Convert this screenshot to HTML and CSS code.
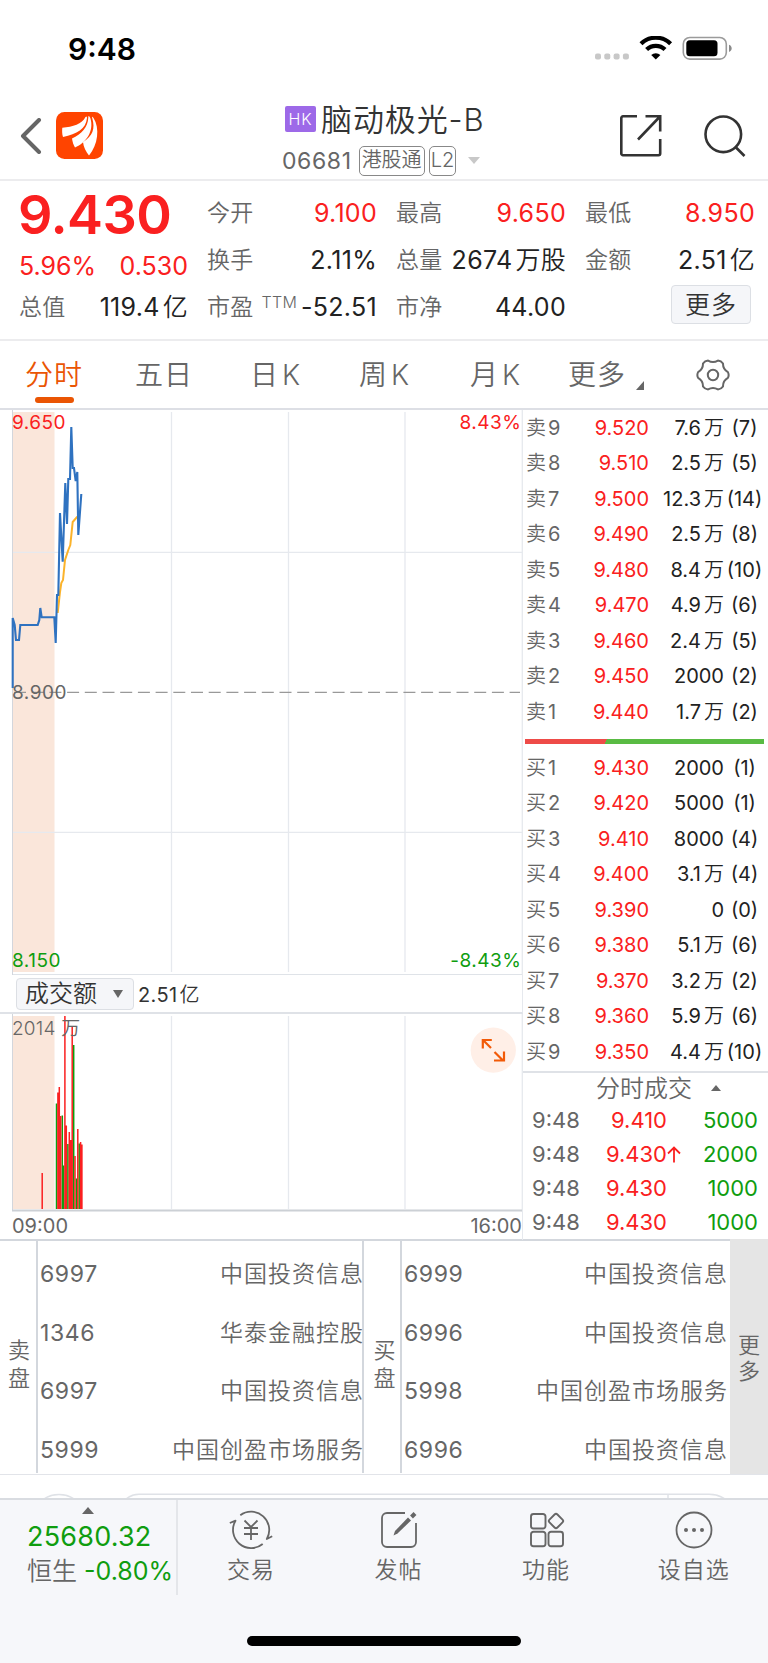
FILE: index.html
```html
<!DOCTYPE html>
<html lang="zh-CN">
<head>
    <meta charset="UTF-8">
    <meta name="viewport" content="width=device-width, initial-scale=1.0">
    <title>脑动极光-B 06681</title>
    <link rel="stylesheet" href="styles.css">
</head>
<body>
    <div class="status-bar">
        <div class="time">9:48</div>
        <svg class="status-icons" width="140" height="26" viewBox="0 0 140 26">
            <g fill="#c8c8c8">
                <rect x="0" y="17.500" width="6" height="6" rx="2"/>
                <rect x="9.3" y="17.500" width="6" height="6" rx="2"/>
                <rect x="18.6" y="17.500" width="6" height="6" rx="2"/>
                <rect x="27.9" y="17.500" width="6" height="6" rx="2"/>
            </g>
            <g fill="none" stroke="#000" stroke-width="4.2">
                <path d="M46 7.800a21 21 0 0 1 29.6 0"/>
                <path d="M51.600 13.600a13 13 0 0 1 18.400 0"/>
            </g>
            <path d="M60.8 23.500l-4.600-4.600a7 7 0 0 1 9.200 0z"/>
            <rect x="88.3" y="1.500" width="43" height="21.6" rx="6.5" fill="#fff" stroke="#9b9b9b" stroke-width="1.6"/>
            <rect x="91.3" y="4.300" width="31.2" height="16" rx="3.5"/>
            <path d="M134 8.700c3.600 1.200 3.600 6 0 7.200z" fill="#8a8a8a"/>
        </svg>
    </div>

    <div class="header">
        <svg class="back" width="22" height="36" viewBox="0 0 22 36" fill="none" stroke="#666" stroke-width="4" stroke-linecap="round" stroke-linejoin="round"><path d="M19 2L3 18l16 16"/></svg>
        <svg class="logo" width="47" height="47" viewBox="0 0 47 47">
            <rect width="47" height="47" rx="8.5" fill="#ff4400"/>
            <g fill="#fff">
                <path d="M6.300 15.700C17 15 26 12 29.500 5Q31 3.500 31 6C30 17 21 22 7 25C6 22 6 18 6.300 15.700z"/>
                <path d="M32.300 5.500C32 15 25.500 22.500 16 26.500C16.500 30 17.500 33 19 35.500C30 31 38.500 19 34.300 6Q32.300 2.500 32.300 5.500z"/>
                <path d="M36.200 6C39.500 17 36.500 24 27 30C27.500 35 30 40 33 43.500C42 33 44 16 37.500 6Q35.700 3.500 36.200 6z"/>
            </g>
        </svg>
        <div class="title">
            <div class="name"><span class="hk">HK</span>脑动极光-B</div>
            <div class="code">06681<span class="tag">港股通</span><span class="tag l2">L2</span><i class="caret"></i></div>
        </div>
        <svg class="share" width="42" height="42" viewBox="0 0 42 42" fill="none" stroke="#333" stroke-width="2.600"><path d="M17 1.300H3a1.700 1.700 0 0 0-1.700 1.700v35.500a1.700 1.700 0 0 0 1.700 1.700h35.500a1.700 1.700 0 0 0 1.700-1.700V24M25.500 1.300h14.700V16.500M40 1.500L18 24.500"/></svg>
        <svg class="search" width="42" height="42" viewBox="0 0 42 42" fill="none" stroke="#333" stroke-width="2.600"><circle cx="19.300" cy="19.300" r="17.800"/><path d="M31 31.500l9.500 9.500"/></svg>
    </div>

    <div class="quote">
        <div class="quote-main">
            <div class="price">9.430</div>
            <div class="cell change"><span>5.96%</span><span>0.530</span></div>
            <div class="cell cap"><label>总值</label><b>119.4<em>亿</em></b></div>
        </div>
        <div class="quote-col">
            <div class="cell"><label>今开</label><b class="red">9.100</b></div>
            <div class="cell"><label>换手</label><b>2.11%</b></div>
            <div class="cell"><label class="pe">市盈<sup>TTM</sup></label><b>-52.51</b></div>
        </div>
        <div class="quote-col">
            <div class="cell"><label>最高</label><b class="red">9.650</b></div>
            <div class="cell"><label>总量</label><b>2674<em>万股</em></b></div>
            <div class="cell"><label>市净</label><b>44.00</b></div>
        </div>
        <div class="quote-col">
            <div class="cell"><label>最低</label><b class="red">8.950</b></div>
            <div class="cell"><label>金额</label><b>2.51<em>亿</em></b></div>
            <div class="cell end"><button class="more-btn">更多</button></div>
        </div>
    </div>

    <div class="tabs">
        <div class="tab active">分时</div>
        <div class="tab">五日</div>
        <div class="tab">日<i>K</i></div>
        <div class="tab">周<i>K</i></div>
        <div class="tab">月<i>K</i></div>
        <div class="tab">更多<svg width="8" height="9" viewBox="0 0 8 9"><path d="M8 0v9H0z" fill="#666"/></svg></div>
        <svg class="gear" width="34" height="32" viewBox="-17 -16 34 32" fill="none" stroke="#666" stroke-width="2" stroke-linejoin="round"><circle r="5.200"/><path d="M14.900 -2.900Q16.400 0 14.900 2.900Q9.900 5.700 10 11.500Q8.200 14.200 4.950 14.400Q0 11.400 -4.950 14.400Q-8.200 14.200 -10 11.500Q-9.900 5.700 -14.900 2.900Q-16.400 0 -14.900 -2.900Q-9.900 -5.700 -10 -11.500Q-8.200 -14.200 -4.950 -14.400Q0 -11.400 4.950 -14.400Q8.200 -14.200 10 -11.500Q9.900 -5.700 14.900 -2.900z"/></svg>
    </div>

    <div class="market">
        <div class="charts">
            <!-- price line -->
            <svg class="price-chart" width="523" height="565" viewBox="0 0 523 565">
                <rect x="12" y="2" width="42.500" height="560" fill="#fae6da"/>
                <path d="M12.500 0V565" stroke="#d3d6dc" fill="none"/>
                <path d="M171.500 2V562M288.500 2V562M405 2V562M522.300 0V565M13 142.300H522M13 422.300H522" stroke="#e6e9ee" stroke-width="1.300" fill="none"/>
                <path d="M14 282.400H520" stroke="#999" stroke-width="1.400" stroke-dasharray="12 5.700" fill="none"/>
                <path d="M13 564.500H522" stroke="#dfe3e8" fill="none"/>
                <polyline points="57.7,203 60,182 61.3,173 63,170 65,150 68.3,140 70.3,135 72.7,112 75.3,109 77.3,106.7" fill="none" stroke="#fbb32b" stroke-width="2"/>
                <polyline points="12.7,278 12.7,208 14.7,215 16,230 19,230 20.3,215 37.7,215 39.3,210 40.3,198 41.7,207.3 54.3,207.3 55.7,233 57,185 58.3,185 60,103 62.7,151.7 65.3,73 67,114 68.3,69 70,69 71.3,17 72.7,58 74,58 75.7,71 77.3,62 78.300,125 81.300,84" fill="none" stroke="#2f72c0" stroke-width="2.100"/>
                <text x="12" y="18.700" class="red">9.650</text>
                <text x="521.500" y="18.700" class="red" text-anchor="end">8.43%</text>
                <text x="12" y="288.500">8.900</text>
                <text x="12" y="557" class="green">8.150</text>
                <text x="521.500" y="557" class="green" text-anchor="end">-8.43%</text>
            </svg>
            <div class="indicator">
                <div class="select">成交额<i></i></div>
                <span>2.51<em>亿</em></span>
            </div>
            <!-- turnover bars -->
            <svg class="vol-chart" width="523" height="198" viewBox="0 0 523 198">
                <rect x="12" y="2" width="42.500" height="193" fill="#fae6da"/>
                <path d="M171.500 2V195M288.500 2V195M405 2V195M522.300 0V198" stroke="#e6e9ee" stroke-width="1.300" fill="none"/>
                <path d="M12.500 0V197" stroke="#d3d6dc" fill="none"/>
                <g stroke-width="1.500" fill="none">
                    <path stroke="#0f9d0f" d="M56.500 195V89.500M62.300 195V101.500M63.500 195V151.500M67.900 195V130M73.700 195V31M76.500 195V164.500M79.200 195V129.500"/>
                    <path stroke="#fa2020" d="M42.200 195V159M57.900 195V78.500M59.300 195V73M60.700 195V102M64.900 195V2M66.300 195V111.500M69.300 195V118M70.800 195V126M72.200 195V13M75 195V142M77.800 195V115M80.600 195V128M81.900 195V130.500"/>
                </g>
                <path d="M12 196.500H522" stroke="#ccd0d5" stroke-width="1.800" fill="none"/>
                <text x="12" y="20.700" class="peak">2014 万</text>
                <circle cx="493.300" cy="36.200" r="22.600" fill="#ffefe7"/>
                <path d="M491 34l-8-8M482.800 34.500V26h9M494.500 38l8 8M504 37.500V46.500h-10" fill="none" stroke="#f25a07" stroke-width="2.200"/>
            </svg>
            <div class="axis"><span>09:00</span><span>16:00</span></div>
        </div>

        <div class="book">
            <div class="levels sell">
                <div class="level"><label>卖<i>9</i></label><b>9.520</b><span>7.6<em>万</em></span><u>(7)</u></div>
                <div class="level"><label>卖<i>8</i></label><b>9.510</b><span>2.5<em>万</em></span><u>(5)</u></div>
                <div class="level"><label>卖<i>7</i></label><b>9.500</b><span>12.3<em>万</em></span><u>(14)</u></div>
                <div class="level"><label>卖<i>6</i></label><b>9.490</b><span>2.5<em>万</em></span><u>(8)</u></div>
                <div class="level"><label>卖<i>5</i></label><b>9.480</b><span>8.4<em>万</em></span><u>(10)</u></div>
                <div class="level"><label>卖<i>4</i></label><b>9.470</b><span>4.9<em>万</em></span><u>(6)</u></div>
                <div class="level"><label>卖<i>3</i></label><b>9.460</b><span>2.4<em>万</em></span><u>(5)</u></div>
                <div class="level"><label>卖<i>2</i></label><b>9.450</b><span>2000</span><u>(2)</u></div>
                <div class="level"><label>卖<i>1</i></label><b>9.440</b><span>1.7<em>万</em></span><u>(2)</u></div>
            </div>
            <div class="ratio"></div>
            <div class="levels buy">
                <div class="level"><label>买<i>1</i></label><b>9.430</b><span>2000</span><u>(1)</u></div>
                <div class="level"><label>买<i>2</i></label><b>9.420</b><span>5000</span><u>(1)</u></div>
                <div class="level"><label>买<i>3</i></label><b>9.410</b><span>8000</span><u>(4)</u></div>
                <div class="level"><label>买<i>4</i></label><b>9.400</b><span>3.1<em>万</em></span><u>(4)</u></div>
                <div class="level"><label>买<i>5</i></label><b>9.390</b><span>0</span><u>(0)</u></div>
                <div class="level"><label>买<i>6</i></label><b>9.380</b><span>5.1<em>万</em></span><u>(6)</u></div>
                <div class="level"><label>买<i>7</i></label><b>9.370</b><span>3.2<em>万</em></span><u>(2)</u></div>
                <div class="level"><label>买<i>8</i></label><b>9.360</b><span>5.9<em>万</em></span><u>(6)</u></div>
                <div class="level"><label>买<i>9</i></label><b>9.350</b><span>4.4<em>万</em></span><u>(10)</u></div>
            </div>
            <div class="trades">
                <div class="trades-title">分时成交<i></i></div>
                <div class="trade"><label>9:48</label><b>9.410</b><s></s><span>5000</span></div>
                <div class="trade"><label>9:48</label><b>9.430</b><s><svg width="14" height="17" viewBox="0 0 14 17" fill="none" stroke="#fa2020" stroke-width="1.800"><path d="M7 16.500V1.500M1 7.500l6-6 6 6"/></svg></s><span>2000</span></div>
                <div class="trade"><label>9:48</label><b>9.430</b><s></s><span>1000</span></div>
                <div class="trade"><label>9:48</label><b>9.430</b><s></s><span>1000</span></div>
            </div>
        </div>
    </div>

    <div class="brokers">
        <div class="side">卖<br>盘</div>
        <div class="broker-list first">
            <div><span>6997</span><em>中国投资信息</em></div>
            <div><span>1346</span><em>华泰金融控股</em></div>
            <div><span>6997</span><em>中国投资信息</em></div>
            <div><span>5999</span><em>中国创盈市场服务</em></div>
        </div>
        <div class="side buy-side">买<br>盘</div>
        <div class="broker-list">
            <div><span>6999</span><em>中国投资信息</em></div>
            <div><span>6996</span><em>中国投资信息</em></div>
            <div><span>5998</span><em>中国创盈市场服务</em></div>
            <div><span>6996</span><em>中国投资信息</em></div>
        </div>
        <div class="side more-side">更<br>多</div>
    </div>

    <svg class="peek" width="768" height="23" viewBox="0 0 768 23" fill="none" stroke="#dfe2e7" stroke-width="1.500"><path d="M44 24c8-6 22-6 30 0M126 24q6-4.700 13-4.700H709q9 0 16 4.700M668 20v4"/></svg>

    <div class="bottom-bar">
        <div class="index">
            <i></i>
            <div class="index-value">25680.32</div>
            <div class="index-name">恒生 <b>-0.80%</b></div>
        </div>
        <div class="nav-item">
            <svg width="44" height="40" viewBox="-22 -20 44 40" fill="none" stroke="#666" stroke-width="1.800" stroke-linejoin="round"><path d="M-10.700 -14.800A18.200 18.200 0 0 1 15.800 9L21.200 6.200M11.700 14A18.200 18.200 0 0 1 -15.500 -9.300L-21.200 -7"/><path d="M-6.500 -9.500L0 -3L6.500 -9.500M0 -3V10M-7 -2H7M-7 4H7"/></svg>
            <span>交易</span>
        </div>
        <div class="nav-item">
            <svg width="44" height="40" viewBox="-22 -20 44 40" fill="none" stroke="#666" stroke-width="1.800"><path d="M6 -17H-12A5 5 0 0 0 -17 -12V12A5 5 0 0 0 -12 17H12A5 5 0 0 0 17 12V-7"/><path d="M-5.500 5.500l1.500-4.500L9-12.500l3 3L-1.500 3.500z" fill="#666" stroke="none"/><path d="M12.500 -13L16 -16.500" stroke-width="4"/></svg>
            <span>发帖</span>
        </div>
        <div class="nav-item">
            <svg width="44" height="40" viewBox="-22 -20 44 40" fill="none" stroke="#666" stroke-width="1.900"><rect x="-16" y="-16" width="14.500" height="14.500" rx="2.500"/><rect x="-16" y="1.700" width="14.500" height="14.500" rx="2.500"/><rect x="1.500" y="1.700" width="14.500" height="14.500" rx="2.500"/><rect x="-5.600" y="-5.600" width="11.200" height="11.200" rx="2" transform="translate(9 -9) rotate(45)"/></svg>
            <span>功能</span>
        </div>
        <div class="nav-item">
            <svg width="44" height="40" viewBox="-22 -20 44 40" fill="none" stroke="#666" stroke-width="1.800"><circle r="17.500"/><g fill="#666" stroke="none"><circle cx="-8" r="2"/><circle r="2"/><circle cx="8" r="2"/></g></svg>
            <span>设自选</span>
        </div>
        <div class="home-indicator"></div>
    </div>
</body>
</html>
```
FILE: styles.css
```css
:root {
    --red: #fa2020;
    --green: #0f9d0f;
    --orange: #ea5504;
    --text: #222;
    --gray: #666;
    --line: #e6e9ee;
}
* {
    margin: 0;
    padding: 0;
    box-sizing: border-box;
}
body {
    width: 768px;
    height: 1663px;
    overflow: hidden;
    background: #fff;
    color: var(--gray);
    font-family: Inter, "Noto Sans CJK SC", sans-serif;
    font-weight: 400;
}
b, em, i, u, s {
    font-weight: inherit;
    font-style: normal;
    text-decoration: none;
}
label, em {
    font-weight: 350;
}
svg {
    display: block;
    flex-shrink: 0;
}
.red {
    color: var(--red);
}

/* status bar */
.status-bar {
    height: 98px;
    padding: 0 33px 0 68px;
    display: flex;
    justify-content: space-between;
    align-items: center;
}
.time {
    color: #000;
    font-size: 30px;
    font-weight: 600;
}

/* header */
.header {
    height: 83px;
    padding: 0 22px 0 20px;
    display: flex;
    align-items: flex-start;
    border-bottom: 2px solid #ececee;
}
.back {
    margin-top: 20px;
}
.logo {
    margin: 14px 0 0 14px;
}
.title {
    flex: 1;
    margin-left: 179px;
}
.name {
    display: flex;
    align-items: center;
    height: 44px;
    margin: -3px 0 3px 3px;
    color: #333;
    font-size: 31px;
    font-weight: 350;
    letter-spacing: 0.9px;
    white-space: nowrap;
}
.hk {
    width: 31px;
    height: 26px;
    margin: 4px 5px 0 0;
    border-radius: 2px;
    background: #9d69e8;
    color: #fff;
    font-size: 16px;
    line-height: 26px;
    text-align: center;
}
.code {
    display: flex;
    align-items: center;
    height: 37px;
    font-size: 23px;
    letter-spacing: 0.6px;
    white-space: nowrap;
}
.tag {
    height: 30px;
    margin-left: 7px;
    padding: 0 2px;
    border: 1.5px solid #888;
    border-radius: 5px;
    font-size: 20px;
    font-weight: 350;
    letter-spacing: 0;
    line-height: 27px;
}
.l2 {
    margin-left: 4px;
    padding: 0 1px;
}
.caret {
    margin-left: 12px;
    border: 6.5px solid transparent;
    border-top: 7.500px solid #c8c8c8;
    border-bottom: 0;
}
.share {
    margin: 17px 42px 0 0;
}
.search {
    margin-top: 17px;
}

/* quote */
.quote {
    height: 160px;
    padding: 7px 13px 0 19px;
    display: grid;
    grid-template-columns: 169px 170px 170px 170px;
    column-gap: 19px;
    border-bottom: 2px solid #ececee;
}
.quote-col {
    padding-top: 2px;
}
.price {
    height: 59px;
    margin-left: -1px;
    color: var(--red);
    font-size: 54px;
    font-weight: 600;
    letter-spacing: -0.6px;
    line-height: 54px;
}
.cell {
    display: flex;
    justify-content: space-between;
    align-items: center;
    height: 47px;
    color: var(--text);
    font-size: 25px;
    letter-spacing: 0.3px;
    line-height: 47px;
    white-space: nowrap;
}
.cell label {
    color: var(--gray);
    font-size: 23px;
}
.cell .red {
    color: var(--red);
}
.cell em {
    margin-left: 3px;
}
.change {
    height: 38px;
    color: var(--red);
    letter-spacing: 0;
}
.cap {
    height: 45px;
}
.cell sup {
    margin-left: 8px;
    font-size: 16px;
    line-height: 1;
    vertical-align: 7px;
}
.end {
    justify-content: flex-end;
}
.more-btn {
    width: 80px;
    height: 39px;
    margin: -6px 4px 0 0;
    border: 1.5px solid #dcdfe4;
    border-radius: 4px;
    background: #f5f6f9;
    color: #333;
    font-family: inherit;
    font-size: 25px;
    font-weight: 350;
    letter-spacing: 1px;
    line-height: 34px;
}

/* tabs */
.tabs {
    height: 69px;
    display: flex;
    align-items: center;
    padding-left: 25px;
    border-bottom: 2px solid #dddfe5;
    font-size: 28px;
    font-weight: 350;
    letter-spacing: 1px;
}
.tab {
    width: 110px;
    height: 67px;
    line-height: 69px;
    white-space: nowrap;
}
.tab:nth-child(2) { width: 115px; }
.tab:nth-child(3) { width: 109px; }
.tab:nth-child(4) { width: 111px; }
.tab:nth-child(5) { width: 98px; }
.tab:nth-child(6) {
    display: flex;
    width: 128px;
}
.tab i {
    margin-left: 3px;
}
.tab svg {
    margin: 40px 0 0 10px;
}
.active {
    display: flex;
    flex-direction: column;
    color: var(--orange);
}
.active::after {
    content: "";
    width: 39px;
    height: 6px;
    margin: -13px 0 0 10px;
    border-radius: 3px;
    background: var(--orange);
}

/* charts */
.market {
    height: 829px;
    display: flex;
}
.charts {
    width: 523px;
}
.charts text {
    fill: var(--gray);
    font-size: 19px;
    letter-spacing: 0.5px;
}
.charts text.red {
    fill: var(--red);
}
.charts text.green {
    fill: var(--green);
}
.charts .peak {
    font-weight: 350;
    letter-spacing: 0.2px;
}
.indicator {
    height: 39px;
    padding-left: 16px;
    display: flex;
    align-items: center;
    border-bottom: 2px solid #dfe2e7;
    border-right: 1px solid var(--line);
    color: #333;
    font-size: 20px;
}
.indicator span {
    margin-left: 4px;
    letter-spacing: 0.4px;
}
.indicator em {
    margin-left: 2px;
}
.select {
    width: 118px;
    height: 32px;
    padding: 0 10px 0 8px;
    display: flex;
    align-items: center;
    justify-content: space-between;
    border: 1.5px solid #dcdfe4;
    border-radius: 4px;
    background: #f5f6f9;
    font-size: 24px;
    font-weight: 350;
    line-height: 28px;
}
.select i {
    border: 5px solid transparent;
    border-top: 8px solid #666;
    border-bottom: 0;
}
.axis {
    display: flex;
    justify-content: space-between;
    height: 28px;
    padding-left: 12px;
    border-right: 1px solid var(--line);
    font-size: 20px;
    line-height: 29px;
}

/* order book */
.book {
    flex: 1;
}
.levels {
    height: 320px;
    padding-top: 1px;
}
.level {
    display: flex;
    height: 35.45px;
    padding-left: 3px;
    color: var(--text);
    font-size: 20px;
    line-height: 35.45px;
}
.level label {
    width: 50px;
    color: var(--gray);
}
.level i {
    margin-left: 2px;
    font-weight: 400;
}
.level b {
    width: 73px;
    color: var(--red);
    text-align: right;
}
.level span {
    width: 75px;
    text-align: right;
}
.level em {
    margin-left: 3px;
}
.level u {
    width: 41px;
    text-align: center;
}
.ratio {
    height: 5px;
    margin: 9px 4px 6px 2px;
    background: linear-gradient(120deg, #ee4b48 34%, #59bb43 34%);
}
.trades {
    border-top: 2px solid #dfe2e7;
    margin-top: 1px;
}
.trades-title {
    display: flex;
    align-items: center;
    justify-content: center;
    height: 30px;
    padding: 0 0 4px 26px;
    font-size: 24px;
    font-weight: 350;
}
.trades-title i {
    margin: 4px 0 0 19px;
    border: 5.5px solid transparent;
    border-bottom: 6px solid #666;
    border-top: 0;
}
.trade {
    display: flex;
    align-items: center;
    height: 34.1px;
    padding: 0 10px 0 9px;
    font-size: 22px;
}
.trade label {
    width: 52px;
    font-weight: 400;
}
.trade b {
    width: 83px;
    color: var(--red);
    text-align: right;
}
.trade s {
    width: 14px;
}
.trade span {
    flex: 1;
    color: var(--green);
    text-align: right;
}

/* broker queue */
.brokers {
    height: 236px;
    display: flex;
    border-top: 2px solid #d3d7dd;
    border-bottom: 1.5px solid #e2e4e9;
}
.side {
    width: 36px;
    display: flex;
    align-items: center;
    justify-content: center;
    padding: 12px 0 0 2px;
    font-size: 22px;
    font-weight: 350;
    line-height: 28px;
}
.buy-side {
    padding-left: 5px;
}
.more-side {
    width: 38px;
    margin-top: -2px;
    padding: 2px 0 0;
    background: #e5e5e5;
    line-height: 26px;
}
.broker-list {
    width: 330px;
    height: 232px;
    padding: 4px 3px 0 2px;
    border-left: 2px solid #d3d7dd;
    font-size: 23px;
}
.first {
    width: 328px;
    padding-right: 0;
    border-right: 2px solid #d3d7dd;
}
.broker-list div {
    display: flex;
    justify-content: space-between;
    height: 58.7px;
    line-height: 58.7px;
}
.broker-list span {
    letter-spacing: 0.6px;
}
.broker-list em {
    letter-spacing: 1px;
    margin-right: -1px;
}
.first em {
    margin-right: -2px;
}

/* bottom bar */
.bottom-bar {
    position: relative;
    height: 165px;
    display: flex;
    border-top: 2px solid #d9dce1;
    background: #f6f7fa;
}
.index {
    width: 178px;
    height: 95px;
    padding: 7px 0 0 27px;
    border-right: 2px solid #e4e6ea;
    white-space: nowrap;
}
.index i {
    display: block;
    width: 0;
    margin-left: 55px;
    border: 6.5px solid transparent;
    border-bottom: 7px solid #666;
    border-top: 0;
}
.index-value {
    color: var(--green);
    font-size: 27px;
    letter-spacing: 0.2px;
    line-height: 45px;
}
.index-name {
    font-size: 25px;
    font-weight: 350;
    line-height: 25px;
}
.index b {
    color: var(--green);
    font-weight: 400;
}
.nav-item {
    width: 148px;
    display: flex;
    flex-direction: column;
    align-items: center;
    padding-top: 10px;
    font-size: 23px;
    font-weight: 350;
    letter-spacing: 1px;
}
.nav-item span {
    margin-left: -1px;
    line-height: 40px;
}
.home-indicator {
    position: absolute;
    left: 247px;
    bottom: 17px;
    width: 274px;
    height: 10px;
    border-radius: 5px;
    background: #000;
}
```
